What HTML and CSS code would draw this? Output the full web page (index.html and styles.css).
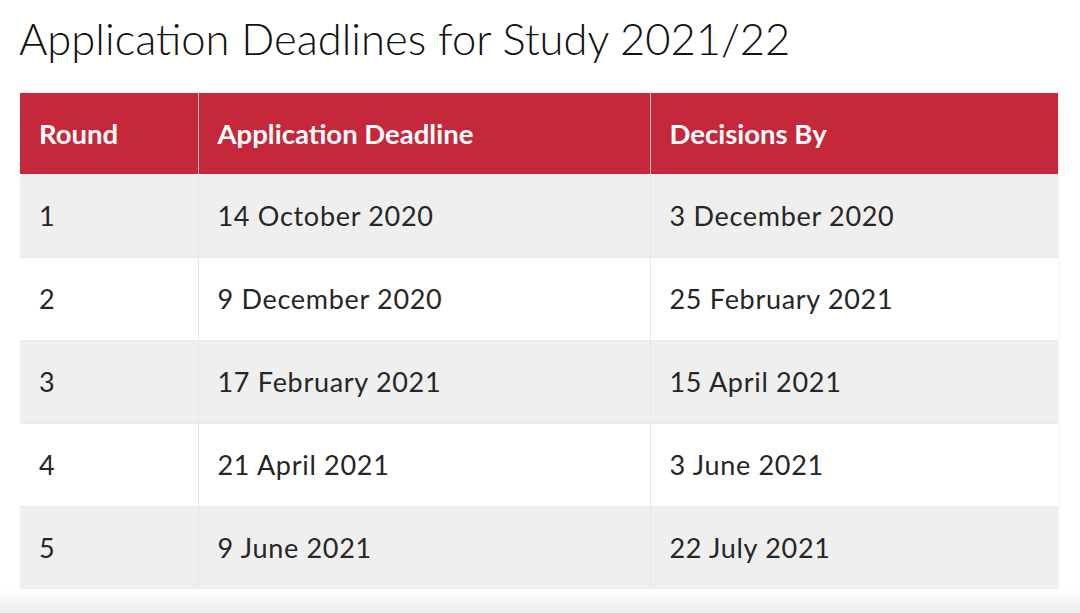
FILE: index.html
```html
<!DOCTYPE html>
<html>
<head>
<meta charset="utf-8">
<link rel="stylesheet" href="styles.css">
</head>
<body>
<div class="page">
  <h1 class="title">Application Deadlines for Study 2021/22</h1>
  <table class="deadlines">
    <thead>
      <tr><th class="c1">Round</th><th class="c2">Application Deadline</th><th class="c3">Decisions By</th></tr>
    </thead>
    <tbody>
      <tr><td>1</td><td>14 October 2020</td><td>3 December 2020</td></tr>
      <tr><td>2</td><td>9 December 2020</td><td>25 February 2021</td></tr>
      <tr><td>3</td><td>17 February 2021</td><td>15 April 2021</td></tr>
      <tr><td>4</td><td>21 April 2021</td><td>3 June 2021</td></tr>
      <tr><td>5</td><td>9 June 2021</td><td>22 July 2021</td></tr>
    </tbody>
  </table>
  <div class="fade"></div>
</div>
</body>
</html>
```
FILE: styles.css
```css
html, body { margin: 0; padding: 0; background: #fff; }
body { font-family: "Lato", "DejaVu Sans", sans-serif; color: #1e1e1e; }
.page { width: 1080px; height: 613px; overflow: hidden; display: flex; flex-direction: column; }
.title {
  margin: 0; padding: 12px 0 0 19px; height: 93px; box-sizing: border-box; flex: none;
  font-weight: 300; font-size: 43.5px; line-height: 52px; color: #111; letter-spacing: 0;
}
.deadlines {
  margin-left: 20px; width: 1038px; border-collapse: collapse; table-layout: fixed;
  box-shadow: 1px 0 2px rgba(0,0,0,0.06); flex: none;
}
.deadlines th, .deadlines td {
  box-sizing: border-box; text-align: left; padding: 0 0 0 19px; vertical-align: middle;
}
.deadlines th {
  background: #c4283a; color: #fff; height: 81px; font-weight: 700; font-size: 27.5px;
  border-left: 1px solid #e7c3c8; padding-top: 1px;
}
.deadlines th:first-child { border-left: none; }
.c1 { width: 178px; }
.c2 { width: 452px; }
.deadlines td {
  height: 83px; font-size: 27px; font-weight: 400; color: #262626; letter-spacing: 0.7px;
  border-left: 1px solid #e8e8e8; border-top: 1px solid #e9e9e9;
}
.deadlines td:first-child { border-left: none; }
.deadlines tbody tr:nth-child(odd) td { background: #efefef; }
.deadlines tbody tr:nth-child(even) td { background: #fff; }
.fade { flex: 1; margin-top: 2px; background: linear-gradient(#fdfdfd, #ededed); }
```
